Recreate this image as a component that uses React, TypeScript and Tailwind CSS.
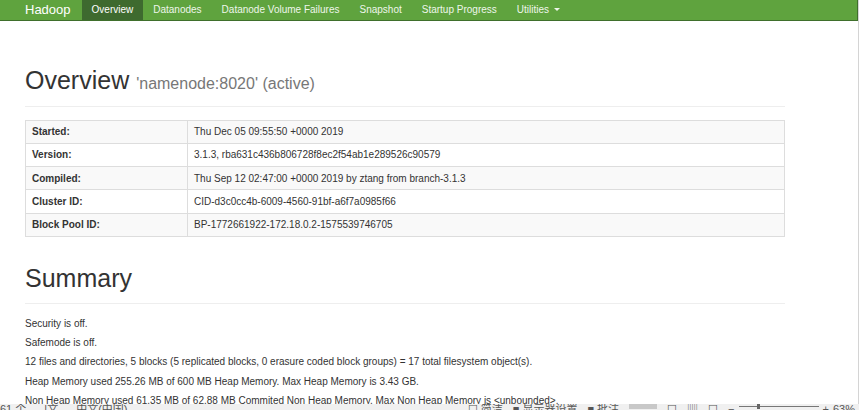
import React from "react";

const rows: [string, string][] = [
  ["Started:", "Thu Dec 05 09:55:50 +0000 2019"],
  ["Version:", "3.1.3, rba631c436b806728f8ec2f54ab1e289526c90579"],
  ["Compiled:", "Thu Sep 12 02:47:00 +0000 2019 by ztang from branch-3.1.3"],
  ["Cluster ID:", "CID-d3c0cc4b-6009-4560-91bf-a6f7a0985f66"],
  ["Block Pool ID:", "BP-1772661922-172.18.0.2-1575539746705"],
];

const summary = [
  "Security is off.",
  "Safemode is off.",
  "12 files and directories, 5 blocks (5 replicated blocks, 0 erasure coded block groups) = 17 total filesystem object(s).",
  "Heap Memory used 255.26 MB of 600 MB Heap Memory. Max Heap Memory is 3.43 GB.",
  "Non Heap Memory used 61.35 MB of 62.88 MB Commited Non Heap Memory. Max Non Heap Memory is <unbounded>.",
];

const navs = ["Datanodes", "Datanode Volume Failures", "Snapshot", "Startup Progress"];

export default function App() {
  return (
    <div
      className="relative flex w-[859px] h-[410px] overflow-hidden bg-white text-[#333]"
      style={{ fontFamily: '"Liberation Sans", Arial, "Noto Sans CJK SC", sans-serif' }}
    >
      <div className="w-[858px] flex flex-col">
        <nav className="h-[27px] bg-[#5fa33e] border-b border-r border-[#3f6f2c] flex items-stretch pl-[25px] text-[10px]">
          <div className="flex items-center text-[13px] text-white pr-[11px]">Hadoop</div>
          <div className="flex items-center px-[10px] bg-[#3e6a2f] text-white">Overview</div>
          {navs.map((n) => (
            <div key={n} className="flex items-center px-[10px] text-[#eef6ea]">
              {n}
            </div>
          ))}
          <div className="flex items-center px-[10px] text-[#eef6ea]">
            Utilities
            <span className="ml-[5px] inline-block w-0 h-0 border-l-[3px] border-r-[3px] border-t-[3px] border-l-transparent border-r-transparent border-t-[#eef6ea]"></span>
          </div>
        </nav>

        <div className="pl-[25px] w-[785px]">
          <div className="mt-[46px] pb-[9px] border-b border-[#eee] leading-[27px]">
            <span className="text-[25px] text-[#333]">Overview</span>
            <span className="ml-[7px] text-[16px] text-[#777]">'namenode:8020' (active)</span>
          </div>

          <table className="mt-[13px] w-[760px] border-collapse border border-[#ddd] text-[10px]">
            <tbody>
              {rows.map(([k, v], i) => (
                <tr key={k} className={i % 2 === 0 ? "bg-[#f9f9f9]" : "bg-white"}>
                  <th className="h-[23.3px] w-[162px] border border-[#ddd] px-[6px] text-left font-bold">
                    {k}
                  </th>
                  <td className="h-[23.3px] border border-[#ddd] px-[6px]">{v}</td>
                </tr>
              ))}
            </tbody>
          </table>

          <div className="mt-[28px] pb-[8px] border-b border-[#eee] leading-[27px]">
            <span className="text-[25px] text-[#333]">Summary</span>
          </div>

          <div className="mt-[10px] text-[10px]">
            {summary.map((s) => (
              <p key={s} className="leading-[19.25px] whitespace-nowrap">
                {s}
              </p>
            ))}
          </div>
        </div>
      </div>
      <div className="w-[1px] bg-[#d4d4d4]"></div>

      <div className="absolute left-0 right-0 bottom-0 h-[6px] bg-[#f0f0f0] overflow-hidden">
        <div className="flex items-start -mt-[1px] h-[14px] text-[11px] leading-[12px] text-[#555] whitespace-nowrap">
          <div className="flex gap-[18px]">
            <span>61 个</span>
            <span>|文</span>
            <span>中文(中国)</span>
          </div>
          <div className="flex items-start gap-[10px] ml-auto pr-[4px]">
            <span>☐ 简洁</span>
            <span>■ 显示器设置</span>
            <span>■ 批注</span>
            <span className="w-[28px] h-[6px] bg-[#c8c8c8]"></span>
            <span>☐</span>
            <span>▥</span>
            <span>☐</span>
            <div className="flex items-start gap-[4px]">
              <span>−</span>
              <span className="relative mt-[3px] w-[80px] h-[1px] bg-[#777]">
                <span className="absolute left-[18px] -top-[3px] w-[3px] h-[6px] bg-[#666]"></span>
              </span>
              <span>+</span>
              <span>63%</span>
            </div>
          </div>
        </div>
      </div>
    </div>
  );
}
